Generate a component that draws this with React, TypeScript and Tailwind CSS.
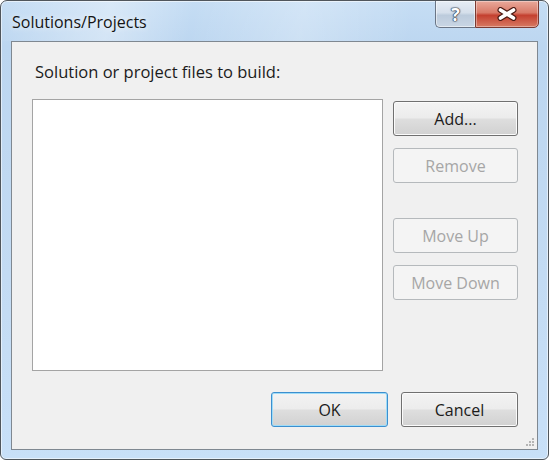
import React from "react";

const FONT = { fontFamily: '"Open Sans", "Noto Sans", "Liberation Sans", sans-serif' };

function Btn({
  label,
  disabled,
  primary,
  className = "",
}: {
  label: string;
  disabled?: boolean;
  primary?: boolean;
  className?: string;
}) {
  if (disabled) {
    return (
      <div
        className={`flex items-center justify-center h-[35px] rounded-[3px] border border-[#b5b9bc] bg-[#f4f4f4] text-[16px] text-[#a6a6a6] ${className}`}
      >
        {label}
      </div>
    );
  }
  return (
    <div
      className={`flex items-center justify-center h-[35px] rounded-[3px] border text-[16px] text-[#1b1b1b] bg-[linear-gradient(to_bottom,#f3f3f3_0%,#ececec_48%,#dedede_52%,#d1d1d1_100%)] ${
        primary
          ? "border-[#3c8fcf] shadow-[inset_0_0_0_1px_#9fdcf7]"
          : "border-[#707070] shadow-[inset_0_0_0_1px_#fbfbfb]"
      } ${className}`}
    >
      {label}
    </div>
  );
}

export default function App() {
  return (
    <div className="w-[550px] h-[461px] bg-white" style={FONT}>
      <div className="w-[549px] h-[460px] flex flex-col rounded-t-[7px] rounded-b-[6px] border border-[#50565c] shadow-[inset_0_0_0_1px_rgba(255,255,255,0.55)] bg-[linear-gradient(to_bottom,#c5ddf4_0%,#bcd6f0_10%,#c3dbf3_60%,#c8e0f8_100%)] overflow-hidden">
        {/* title bar */}
        <div className="h-[40px] flex items-start justify-between pl-[11px] pr-[9px] bg-[linear-gradient(100deg,rgba(255,255,255,0)_0%,rgba(255,255,255,0.35)_20%,rgba(255,255,255,0)_35%,rgba(255,255,255,0.25)_55%,rgba(255,255,255,0)_75%)]">
          <div className="pt-[9px] text-[16px] text-[#141414] [text-shadow:0_0_6px_rgba(255,255,255,0.9)]">
            Solutions/Projects
          </div>
          <div className="flex -mt-px">
            <div className="w-[40px] h-[28px] flex items-center justify-center border border-[#6a7585] border-r-0 rounded-bl-[5px] bg-[linear-gradient(to_bottom,#e6edf5_0%,#d5dfeb_45%,#bccbdc_55%,#c9d6e4_100%)] shadow-[inset_0_0_0_1px_rgba(255,255,255,0.5)]">
              <span className="text-[18px] font-bold text-white leading-none [text-shadow:0_0_1px_#2e3a4a,0_0_1px_#2e3a4a,0_0_1px_#2e3a4a,0_0_2px_#2e3a4a]">
                ?
              </span>
            </div>
            <div className="w-[64px] h-[28px] flex items-center justify-center border border-[#7a3a32] rounded-br-[5px] bg-[linear-gradient(to_bottom,#e9a99b_0%,#d87a68_45%,#c4402f_55%,#d77a63_100%)] shadow-[inset_0_0_0_1px_rgba(255,255,255,0.35)]">
              <svg width="22" height="14" viewBox="0 0 22 14">
                <path
                  d="M4.5 3 L17.5 11 M17.5 3 L4.5 11"
                  stroke="#4a1a13"
                  strokeWidth="6"
                  strokeLinecap="round"
                />
                <path
                  d="M4.5 3 L17.5 11 M17.5 3 L4.5 11"
                  stroke="#ffffff"
                  strokeWidth="3.6"
                  strokeLinecap="round"
                />
              </svg>
            </div>
          </div>
        </div>

        {/* client area */}
        <div className="relative flex-1 mx-[10px] mb-[9px] border border-[#7f8891] bg-[#f0f0f0] flex flex-col pl-[20px] pr-[19px] pt-[20px]">
          <div className="h-[20px] leading-[20px] text-[16.5px] text-[#1b1b1b] pl-[3px]">
            Solution or project files to build:
          </div>
          <div className="flex gap-[10px] mt-[17px]">
            <div className="w-[351px] h-[272px] border border-[#a4a4a4] bg-white" />
            <div className="flex flex-col w-[125px] pt-[2px]">
              <Btn label="Add..." />
              <Btn label="Remove" disabled className="mt-[12px]" />
              <Btn label="Move Up" disabled className="mt-[35px]" />
              <Btn label="Move Down" disabled className="mt-[12px]" />
            </div>
          </div>
          <div className="flex justify-end gap-[13px] mt-[21px]">
            <Btn label="OK" primary className="w-[117px]" />
            <Btn label="Cancel" className="w-[117px]" />
          </div>
          {/* resize grip */}
          <svg
            className="absolute right-[2px] bottom-[2px]"
            width="10"
            height="10"
            viewBox="0 0 10 10"
          >
            {[
              [8, 2],
              [5, 5],
              [8, 5],
              [2, 8],
              [5, 8],
              [8, 8],
            ].map(([x, y], i) => (
              <rect key={i} x={x - 1} y={y - 1} width="2" height="2" fill="#b4b4b4" />
            ))}
          </svg>
        </div>
      </div>
    </div>
  );
}
